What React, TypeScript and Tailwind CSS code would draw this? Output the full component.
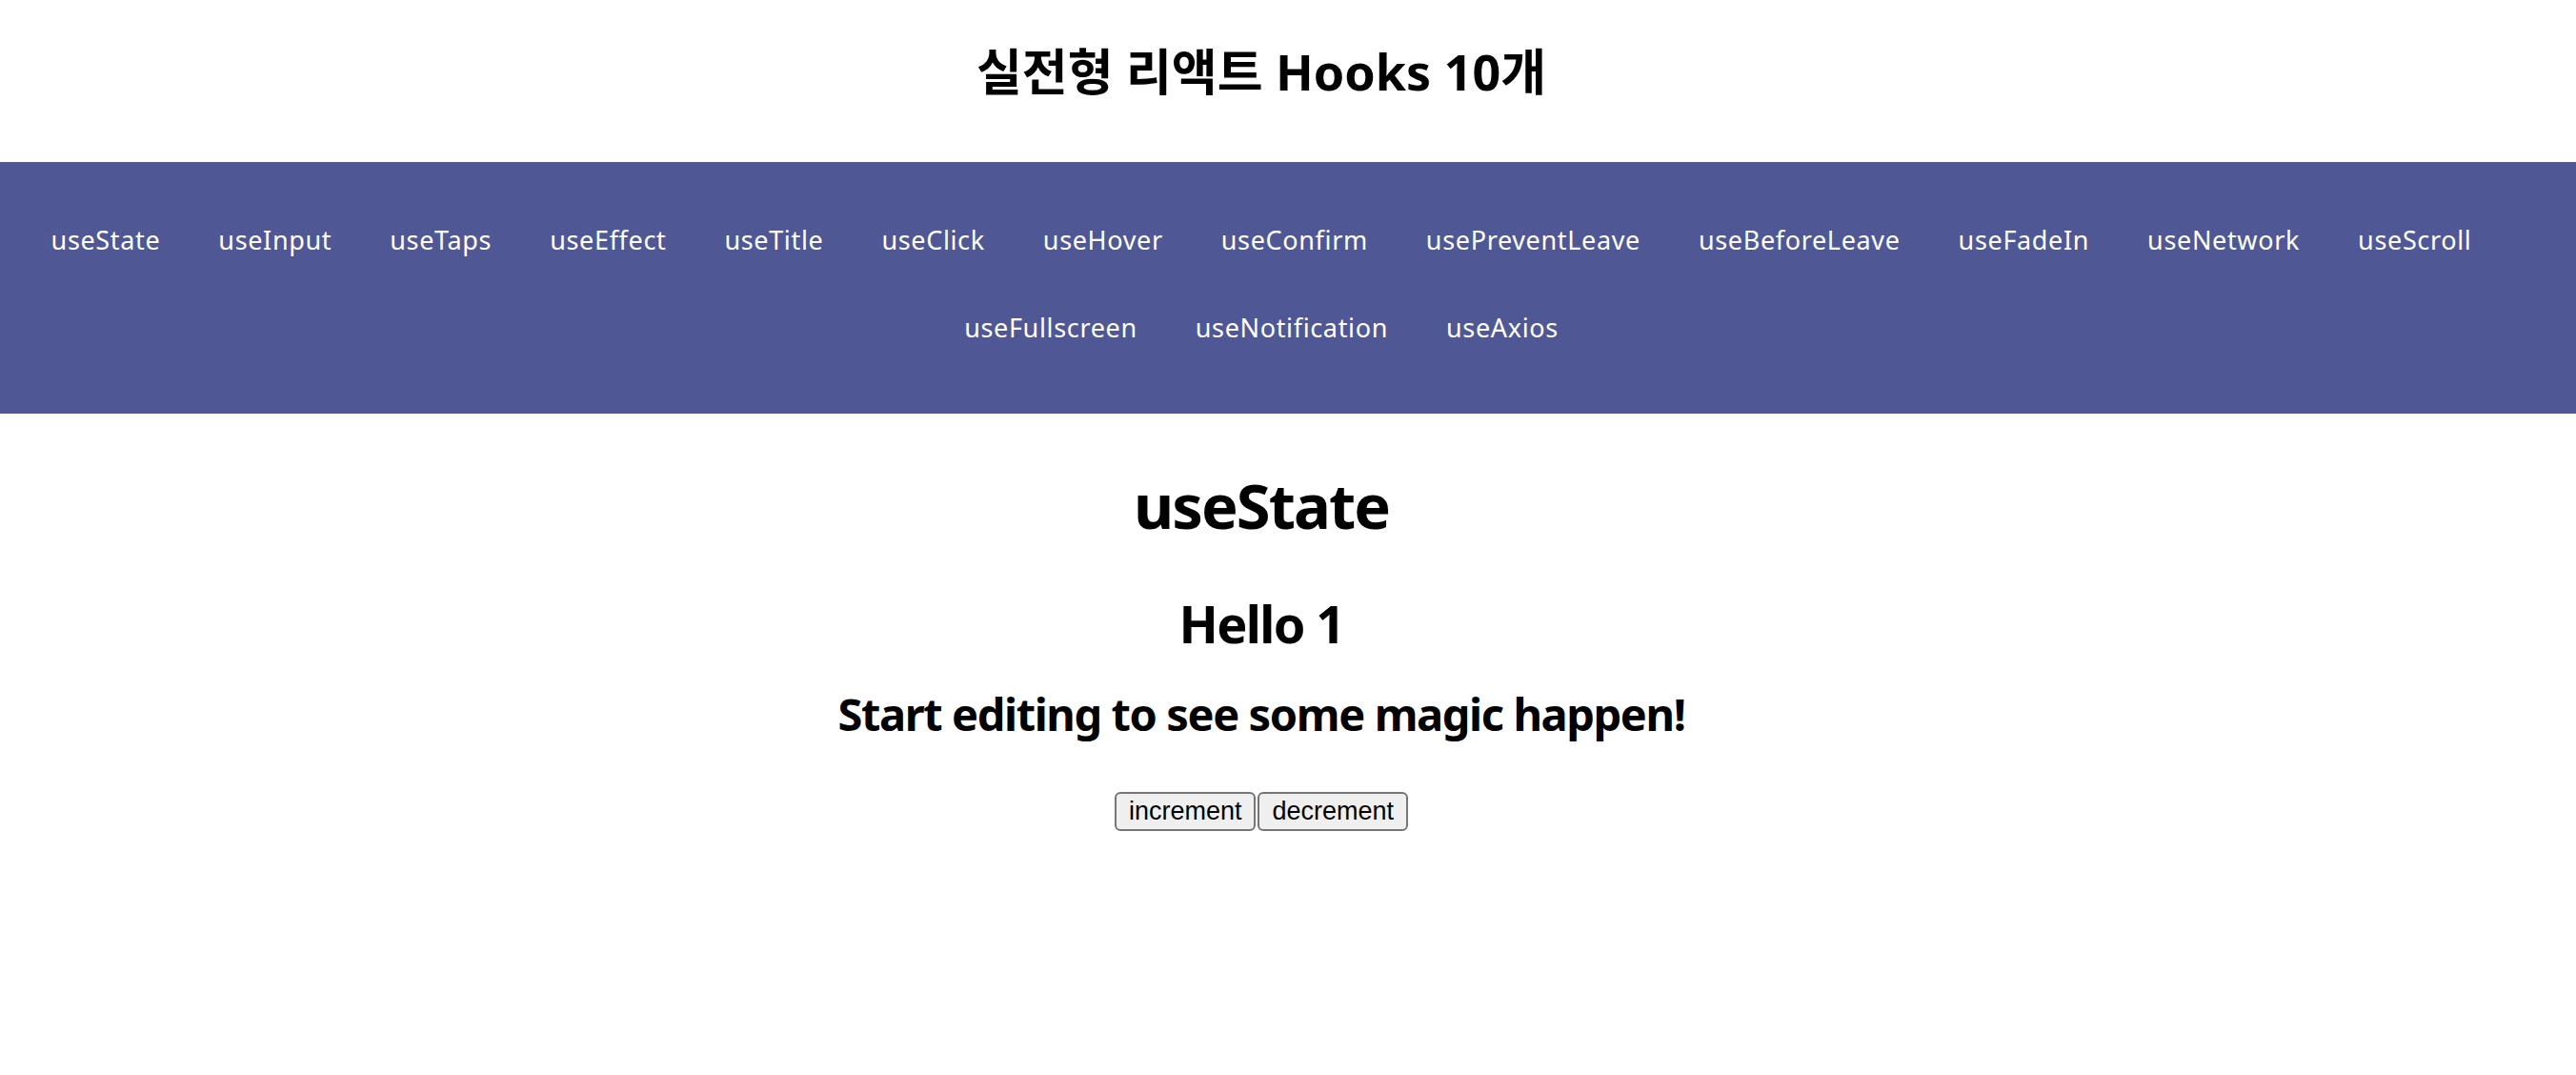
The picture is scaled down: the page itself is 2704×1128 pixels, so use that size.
import { useState } from 'react';

/**
 * Hooks playground: page title, a wrapped nav of hook names, and the
 * active demo (useState counter) centred below it.
 */

const HOOKS = [
  'useState',
  'useInput',
  'useTaps',
  'useEffect',
  'useTitle',
  'useClick',
  'useHover',
  'useConfirm',
  'usePreventLeave',
  'useBeforeLeave',
  'useFadeIn',
  'useNetwork',
  'useScroll',
  'useFullscreen',
  'useNotification',
  'useAxios',
];

export default function App() {
  const [item, setItem] = useState(1);

  return (
    <div className="min-h-screen bg-white font-['Noto_Sans','Noto_Sans_CJK_KR',sans-serif] text-black">
      <header className="h-[170px] pr-[56px] pt-[49px] text-center">
        <h1 className="text-[52px] font-bold leading-[52px]">실전형 리액트 Hooks 10개</h1>
      </header>

      <nav className="h-[264px] bg-[#4f5894] pr-[56px] pt-[36px]">
        <ul className="flex flex-wrap justify-center gap-x-[61px]">
          {HOOKS.map((hook) => (
            <li key={hook}>
              <a href="#" className="block text-[27px] leading-[92px] tracking-[0.65px] text-white">
                {hook}
              </a>
            </li>
          ))}
        </ul>
      </nav>

      <main className="flex flex-col items-center pr-[56px] text-center">
        <h1 className="mt-[64px] text-[65px] font-bold leading-none tracking-[-0.03em]">useState</h1>
        <h1 className="mt-[64px] text-[54px] font-bold leading-none tracking-[-0.03em]">Hello {item}</h1>
        <h2 className="mt-[45px] text-[47px] font-bold leading-none tracking-[-0.03em]">
          Start editing to see some magic happen!
        </h2>
        <div className="mt-[58px] flex gap-[2px] font-['Liberation_Sans',Arial,sans-serif] text-[27px]">
          <button
            className="flex h-[41px] items-center rounded-[6px] border-2 border-[#767676] bg-[#efefef] px-[13px] text-black"
            onClick={() => setItem(item + 1)}
          >
            increment
          </button>
          <button
            className="flex h-[41px] items-center rounded-[6px] border-2 border-[#767676] bg-[#efefef] px-[13px] text-black"
            onClick={() => setItem(item - 1)}
          >
            decrement
          </button>
        </div>
      </main>
    </div>
  );
}
